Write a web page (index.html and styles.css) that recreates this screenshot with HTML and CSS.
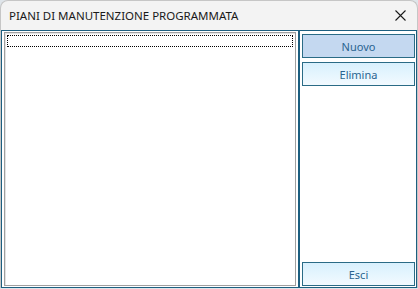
FILE: index.html
```html
<!DOCTYPE html>
<html lang="it">
<head>
  <meta charset="UTF-8" />
  <title>PIANI DI MANUTENZIONE PROGRAMMATA</title>
  <link rel="stylesheet" href="styles.css">
</head>
<body>
  <div class="window">
    <div class="titlebar">
      <span class="title">PIANI DI MANUTENZIONE PROGRAMMATA</span>
      <span class="close">
        <svg width="11" height="11" viewBox="0 0 11 11"><path d="M0.5 0.5 L10.5 10.5 M10.5 0.5 L0.5 10.5" stroke="#1a1a1a" stroke-width="1.1" fill="none"/></svg>
      </span>
    </div>
    <div class="frame">
      <div class="list">
        <div class="focus"></div>
      </div>
      <div class="splitter"></div>
      <div class="side">
        <button class="btn selected">Nuovo</button>
        <button class="btn">Elimina</button>
        <button class="btn bottom">Esci</button>
      </div>
    </div>
  </div>
</body>
</html>
```

FILE: styles.css
```css
body {
  margin: 0;
  width: 418px;
  height: 289px;
  overflow: hidden;
  background: #dfe5ea;
  font-family: "Noto Sans", "Open Sans", sans-serif;
}
.window {
  width: 416px;
  height: 287px;
  border: 1px solid #c6c6c6;
  border-bottom: none;
  border-radius: 8px 8px 0 0;
  background: #f3f3f3;
  display: flex;
  flex-direction: column;
  overflow: hidden;
}
.titlebar {
  height: 29px;
  display: flex;
  align-items: center;
  justify-content: space-between;
  padding: 0 10px 0 8px;
  font-size: 11.5px;
  color: #1a1a1a;
}
.close {
  display: flex;
  width: 11px;
  height: 11px;
  margin-right: 1px;
}
.frame {
  flex: 1;
  display: flex;
  border: 1px solid #1d5f80;
  padding: 1px;
  background: #ffffff;
}
.list {
  flex: 1;
  border: 1px solid #a0a0a0;
  box-shadow: inset 1px 1px 0 #e3e3e3;
  margin-left: 1px;
  padding: 2px;
  background: #ffffff;
}
.focus {
  height: 10px;
  border: 1px dotted #000;
}
.splitter {
  width: 2px;
  background: #1d5f80;
  margin: -1px 2px;
}
.side {
  width: 113px;
  display: flex;
  flex-direction: column;
  gap: 4px;
  padding: 2px 0 0 0;
}
.btn {
  height: 24px;
  border: 1px solid #2a6b86;
  background: linear-gradient(#d8f0fd, #f2faff);
  color: #2a6490;
  font-family: "Noto Sans", "Open Sans", sans-serif;
  font-size: 11px;
  padding: 0;
}
.btn.selected {
  background: #c4d8f0;
}
.btn.bottom {
  margin-top: auto;
}
```
